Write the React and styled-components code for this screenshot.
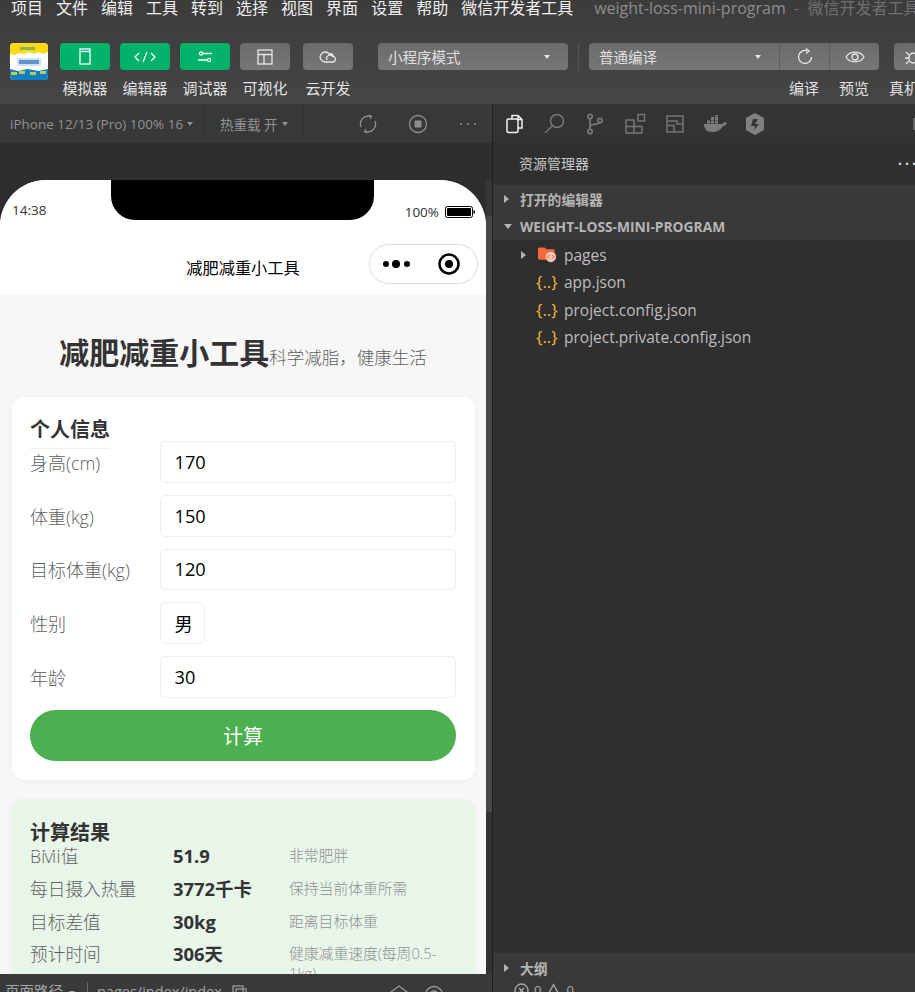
import React from 'react'
import styled, { createGlobalStyle } from 'styled-components'

const GlobalStyle = createGlobalStyle`
  html, body { margin: 0; padding: 0; background: #2f2f2f; }
  * { box-sizing: border-box; }
  body { font-family: "Open Sans", "Noto Sans CJK SC", sans-serif; }
`

const Page = styled.div`
  width: 915px;
  height: 992px;
  overflow: hidden;
  display: flex;
  flex-direction: column;
`

const Top = styled.div`
  height: 104px;
  flex: none;
  overflow: hidden;
  background: linear-gradient(#3c3c3c, #454545);
`

const MenuBar = styled.div`
  height: 43px;
  display: flex;
  align-items: flex-start;
  padding-left: 11px;
  gap: 13px;
  white-space: nowrap;
`

const MenuItem = styled.span`
  font-size: 16px;
  line-height: 17px;
  color: #f0f0f0;
`

const WindowTitle = styled.span`
  font-size: 16px;
  line-height: 17px;
  color: #8d8d8d;
  margin-left: 8px;
`

const TitleDim = styled.span`
  color: #707070;
`

const Toolbar = styled.div`
  display: flex;
  align-items: flex-start;
  padding-left: 10px;
  white-space: nowrap;
`

const Logo = styled.svg`
  width: 38px;
  height: 37px;
  margin-right: 12px;
  flex: none;
`

const Tool = styled.div`
  width: 50px;
  flex: none;
  margin-right: ${p => p.$gap ?? 10}px;
  display: flex;
  flex-direction: column;
  align-items: center;
`

const ToolButton = styled.div`
  width: 50px;
  height: 27px;
  border-radius: 4px;
  display: flex;
  align-items: center;
  justify-content: center;
  background: ${p => (p.$on ? '#00b26a' : 'linear-gradient(#6b6b6b, #777)')};
`

const ToolLabel = styled.div`
  margin-top: 8px;
  font-size: 15px;
  line-height: 20px;
  color: #e2e2e2;
`

const SelectBox = styled.div`
  width: ${p => p.$w}px;
  height: 27px;
  flex: none;
  padding: 0 18px 0 10px;
  display: flex;
  align-items: center;
  justify-content: space-between;
  font-size: 14.5px;
  color: #e0e0e0;
  background: linear-gradient(#6b6b6b, #777);
  border-radius: ${p => p.$radius || '4px'};
`

const Caret = styled.span`
  width: 0;
  height: 0;
  flex: none;
  border-left: 3.5px solid transparent;
  border-right: 3.5px solid transparent;
  border-top: 4px solid #e8e8e8;
`

const Divider = styled.div`
  width: 1px;
  height: 27px;
  flex: none;
  background: #555;
  margin: 0 10px;
`

const CompileColumn = styled.div`
  width: 290px;
  flex: none;
  display: flex;
  flex-direction: column;
`

const CompileRow = styled.div`
  display: flex;
`

const CompileIcon = styled.div`
  width: 50px;
  height: 27px;
  flex: none;
  border-left: 1px solid #5d5d5d;
  border-radius: ${p => p.$radius || '0'};
  background: linear-gradient(#6b6b6b, #777);
  display: flex;
  align-items: center;
  justify-content: center;
`

const CompileLabels = styled.div`
  display: flex;
  gap: 20px;
  padding-left: 200px;
`

const SideButton = styled.div`
  width: 50px;
  height: 27px;
  margin-left: 15px;
  border-radius: 4px;
  flex: none;
  padding-left: 11px;
  display: flex;
  align-items: center;
  background: linear-gradient(#6b6b6b, #777);
`

const Main = styled.div`
  flex: 1;
  min-height: 0;
  display: flex;
`

const Left = styled.div`
  width: 492px;
  flex: none;
  display: flex;
  flex-direction: column;
  overflow: hidden;
`

const SimBar = styled.div`
  height: 39px;
  flex: none;
  display: flex;
  align-items: center;
  background: #383838;
  color: #929292;
  font-size: 13.5px;
  white-space: nowrap;
`

const SimCell = styled.div`
  width: ${p => p.$w}px;
  height: 100%;
  flex: none;
  display: flex;
  align-items: center;
  gap: 4px;
  padding-left: ${p => p.$pad}px;
  border-right: 1px solid #333;
`

const SimCaret = styled(Caret)`
  border-top-color: #929292;
`

const SimIcons = styled.div`
  display: flex;
  align-items: center;
  gap: 30px;
  margin-left: 54px;
`

const Stage = styled.div`
  flex: 1;
  min-height: 0;
  display: flex;
  overflow: hidden;
  background: #2e2e2e;
  padding-top: 37px;
`

const Phone = styled.div`
  width: 486px;
  height: 900px;
  flex: none;
  position: relative;
  background: #f7f7f7;
  border-radius: 46px 46px 0 0;
  overflow: hidden;
`

const Notch = styled.div`
  position: absolute;
  top: 0;
  left: 111px;
  width: 263px;
  height: 40px;
  background: #000;
  border-radius: 0 0 24px 24px;
`

const StatusBar = styled.div`
  height: 57px;
  background: #fff;
  display: flex;
  justify-content: space-between;
  align-items: flex-start;
  padding: 20px 11px 0 12px;
  font-size: 13.5px;
  line-height: 20px;
  color: #333;
`

const BatteryWrap = styled.div`
  display: flex;
  align-items: center;
  gap: 6px;
  margin-top: 2px;
`

const NavBar = styled.div`
  height: 57px;
  position: relative;
  background: #fff;
  display: flex;
  align-items: center;
  justify-content: center;
  padding-top: 3px;
  font-size: 16.2px;
  color: #000;
`

const Capsule = styled.div`
  position: absolute;
  left: 369px;
  top: 7px;
  width: 109px;
  height: 40px;
  border: 1px solid #ddd;
  border-radius: 20px;
  background: #fff;
  display: flex;
  align-items: center;
  padding-left: 12px;
  gap: 26px;
`

const Body = styled.div`
  padding: 0 11px 0 12px;
`

const Hero = styled.div`
  height: 103px;
  display: flex;
  align-items: baseline;
  justify-content: center;
  padding-top: 36px;
  padding-right: 1px;
  white-space: nowrap;
`

const HeroTitle = styled.span`
  font-size: 30px;
  line-height: 46px;
  font-weight: 700;
  color: #333;
`

const HeroSub = styled.span`
  font-size: 17.5px;
  font-weight: 300;
  color: #5f5f5f;
`

const Card = styled.div`
  border-radius: 12px;
  padding: 18px 19px 19px 18px;
  margin-bottom: 19px;
  background: ${p => (p.$tint ? '#e8f5e9' : '#fff')};
  box-shadow: 0 1px 6px rgba(0, 0, 0, 0.04);
`

const CardTitle = styled.div`
  position: relative;
  width: 80px;
  height: 26px;
  font-size: 20px;
  line-height: ${p => (p.$tint ? 28 : 30)}px;
  font-weight: 700;
  color: #333;
  margin-top: ${p => p.$top || 0}px;

  &::after {
    content: '';
    position: absolute;
    left: 0;
    right: 0;
    top: 33px;
    height: 1px;
    background: ${p => (p.$tint ? '#f0f7f0' : '#eee')};
  }
`

const FormRows = styled.div`
  display: flex;
  flex-direction: column;
  gap: 12px;
`

const FormRow = styled.div`
  display: flex;
  align-items: center;
  height: 41.75px;
`

const FieldLabel = styled.div`
  width: 130px;
  flex: none;
  font-size: 18px;
  font-weight: 300;
  color: #5f5f5f;
`

const Field = styled.div`
  width: ${p => p.$w || '296px'};
  height: 100%;
  border: 1px solid #eee;
  border-radius: 5px;
  background: #fff;
  display: flex;
  align-items: center;
  padding-left: 13.5px;
  font-size: 18.2px;
  color: #000;
`

const CalcButton = styled.div`
  margin-top: 12px;
  height: 51px;
  border-radius: 26px;
  background: #4caf50;
  color: #fff;
  font-size: 20px;
  display: flex;
  align-items: center;
  justify-content: center;
`

const ResultRow = styled.div`
  display: grid;
  grid-template-columns: 143px 116px 165px;
  align-items: start;
  min-height: 32.9px;
`

const ResultLabel = styled.div`
  font-size: 17.7px;
  font-weight: 300;
  line-height: 22px;
  color: #5f5f5f;
`

const ResultValue = styled.div`
  font-size: 18.4px;
  line-height: 22px;
  font-weight: 700;
  color: #333;
`

const ResultNote = styled.div`
  font-size: 14.8px;
  font-weight: 300;
  line-height: 20px;
  color: #909090;
`

const Strip = styled.div`
  width: 6px;
  flex: none;
  background: linear-gradient(#363636 0, #363636 36px, #474747 36px, #474747 632px, #333 632px);
`

const BottomBar = styled.div`
  height: 18px;
  flex: none;
  overflow: hidden;
  position: relative;
  background: #3a3a3a;
  display: flex;
  align-items: flex-start;
  padding: 8px 0 0 5px;
  font-size: 14.5px;
  line-height: 20px;
  color: #a5a5a5;
  white-space: nowrap;
`

const PathCaret = styled(Caret)`
  margin: 9px 0 0 6px;
  border-top-color: #a5a5a5;
`

const PathDivider = styled.span`
  width: 1px;
  height: 20px;
  flex: none;
  background: #666;
  margin: 0 9px 0 12px;
`

const CopyIcon = styled.svg`
  width: 15px;
  height: 15px;
  flex: none;
  margin: 3px 0 0 10px;
`

const BottomIcons = styled.div`
  display: flex;
  gap: 15px;
  margin: 3px 0 0 142px;
`

const Right = styled.div`
  flex: 1;
  min-width: 0;
  display: flex;
  flex-direction: column;
  background: #2f2f2f;
  border-left: 1px solid #1f1f1f;
  overflow: hidden;
`

const ActivityBar = styled.div`
  height: 39px;
  flex: none;
  position: relative;
  display: flex;
  align-items: center;
  padding-left: 2px;
  background: #333;
`

const ActivitySlot = styled.div`
  width: 40px;
  flex: none;
  display: flex;
  justify-content: center;
`

const ActivityStub = styled.div`
  position: absolute;
  right: 0;
  top: 14px;
  width: 2px;
  height: 12px;
  background: #666;
`

const ExplorerHead = styled.div`
  height: 42px;
  flex: none;
  display: flex;
  align-items: center;
  justify-content: space-between;
  padding: 0 0 2px 26px;
  font-size: 14px;
  color: #c8c8c8;
`

const MoreDots = styled.span`
  font-size: 14px;
  letter-spacing: 3px;
  color: #ddd;
  font-weight: 700;
  margin-right: -4px;
  transform: translateY(-4px);
`

const SectionHead = styled.div`
  height: 27.5px;
  flex: none;
  display: flex;
  align-items: center;
  gap: 8px;
  padding-left: 11px;
  background: #393939;
  font-size: 13.8px;
  font-weight: 700;
  color: #b5b5b5;
`

const Arrow = styled.span`
  width: 0;
  height: 0;
  flex: none;
  ${p => (p.$open
    ? 'border-left: 4px solid transparent; border-right: 4px solid transparent; border-top: 5px solid #b5b5b5;'
    : `border-top: 4px solid transparent; border-bottom: 4px solid transparent; border-left: 5px solid #b5b5b5; margin-right: ${p.$flush ? 0 : 3}px;`)}
`

const Tree = styled.div`
  flex: 1;
  padding-top: 1px;
`

const TreeRow = styled.div`
  height: 27.5px;
  display: flex;
  align-items: center;
  padding-left: ${p => (p.$folder ? 28 : 43)}px;
  gap: ${p => (p.$folder ? 9 : 7)}px;
  font-size: 15.5px;
  color: #bdbdbd;
`

const FolderIcon = styled.svg`
  width: 19px;
  height: 16px;
  flex: none;
  margin: 0 -2px 0 3px;
`

const JsonIcon = styled.span`
  width: 21px;
  flex: none;
  font-size: 17px;
  line-height: 20px;
  font-weight: 500;
  white-space: nowrap;
  color: #f5b82e;
`

const Outline = styled.div`
  height: 39px;
  flex: none;
  background: #393939;
`

const OutlineHead = styled(SectionHead)`
  height: 28px;
  padding-top: 1px;
`

const StatusIcons = styled.div`
  display: flex;
  align-items: center;
  gap: 5px;
  padding-left: 21px;
  font-size: 13px;
  color: #aaa;
`

const LogoArt = () => (
  <Logo viewBox="0 0 38 37">
    <defs>
      <clipPath id="logoClip"><rect width="38" height="37" rx="4" /></clipPath>
    </defs>
    <g clipPath="url(#logoClip)">
      <rect width="38" height="37" fill="#fff" />
      <path d="M0 0h38v9l-5 2-4-2-5 2-5-2-5 2-5-1-4 2-5-1z" fill="#fbd914" />
      <rect x="10" y="4" width="15" height="3" fill="#8fb05a" />
      <rect x="7" y="15" width="24" height="8" fill="#cfe2f3" />
      <rect x="9" y="17" width="20" height="4" fill="#5f93c9" />
      <path d="M0 26l8 2 10-2 10 2 10-2v11H0z" fill="#0d7fc4" />
      <rect x="1" y="29" width="6" height="3" fill="#c7c94a" />
      <rect x="9" y="28" width="6" height="3" fill="#c7c94a" />
      <rect x="20" y="29" width="6" height="3" fill="#c7c94a" />
      <rect x="30" y="28" width="6" height="3" fill="#c7c94a" />
    </g>
  </Logo>
)

const line = { fill: 'none', stroke: 'currentColor', strokeWidth: 1.3 }

const toolIcons = [
  <svg width="12" height="17" viewBox="0 0 12 17" color="#fff"><rect x="1" y="1" width="10" height="15" {...line} /><path d="M1 3.5h10" {...line} /></svg>,
  <svg width="22" height="12" viewBox="0 0 22 12" color="#fff"><path d="M5 2L1 6l4 4M17 2l4 4-4 4M13 1L9 11" {...line} /></svg>,
  <svg width="14" height="12" viewBox="0 0 14 12" color="#fff"><circle cx="3" cy="2.5" r="1.6" {...line} /><circle cx="11" cy="9" r="1.6" {...line} /><path d="M5 2.5h9M0 9h9" {...line} /></svg>,
  <svg width="16" height="16" viewBox="0 0 16 16" color="#e8e8e8"><rect x="1" y="1" width="14" height="14" {...line} /><path d="M1 5.5h14M7 5.5V15" {...line} /></svg>,
  <svg width="19" height="13" viewBox="0 0 19 13" color="#e8e8e8"><path d="M6 12a5 5 0 1 1 4.2-8 3 3 0 0 1 4.2 2.4A2.9 2.9 0 0 1 14 12zM8 10a3 3 0 0 1 6-3" {...line} /></svg>,
]

const tools = [
  { label: '模拟器', on: true },
  { label: '编辑器', on: true },
  { label: '调试器', on: true },
  { label: '可视化', gap: 13 },
  { label: '云开发', gap: 25 },
]

const activityIcons = [
  <svg width="20" height="20" viewBox="0 0 20 20" color="#f2f2f2"><path d="M7 5V1.5h6l4 4V14h-4M13 1.5v4h4" {...line} strokeWidth="1.5" /><rect x="2" y="5" width="11" height="13.5" rx="1.5" {...line} strokeWidth="1.5" /></svg>,
  <svg width="26" height="22" viewBox="0 0 26 22" color="#777"><circle cx="15" cy="8" r="6.5" {...line} strokeWidth="1.5" /><path d="M10 13l-7 7" {...line} strokeWidth="1.5" /></svg>,
  <svg width="20" height="22" viewBox="0 0 20 22" color="#777"><circle cx="5" cy="3.5" r="2.2" {...line} strokeWidth="1.8" /><circle cx="5" cy="18.5" r="2.2" {...line} strokeWidth="1.8" /><circle cx="15" cy="7.5" r="2.2" {...line} strokeWidth="1.8" /><path d="M5 6v10M5 14c0-4 9-2 10-4.5" {...line} strokeWidth="1.8" /></svg>,
  <svg width="22" height="22" viewBox="0 0 22 22" color="#777"><path d="M2 7h8v13H2zM2 13.5h16V20H10M10 7v6" {...line} strokeWidth="1.5" /><rect x="14" y="1.5" width="6.5" height="6.5" {...line} strokeWidth="1.5" /></svg>,
  <svg width="20" height="20" viewBox="0 0 20 20" color="#777"><rect x="2" y="2" width="16" height="16" {...line} strokeWidth="1.5" /><path d="M2 7h10v3h6M2 11.5h7V18" {...line} strokeWidth="1.5" /></svg>,
  <svg width="25" height="18" viewBox="0 0 25 18" fill="#7b7b7b"><path d="M1 9h18.5c1-2 3-2 4.5-1-1 2-2 3-4 3-2 4-6 6-11 6C4 17 1 14 1 9z" /><rect x="4" y="5.5" width="3" height="3" /><rect x="8" y="5.5" width="3" height="3" /><rect x="12" y="5.5" width="3" height="3" /><rect x="8" y="2" width="3" height="3" /><rect x="12" y="2" width="3" height="3" /><rect x="12" y="0" width="3" height="1.5" /></svg>,
  <svg width="20" height="22" viewBox="0 0 20 22"><path d="M10 0l9 5v12l-9 5-9-5V5z" fill="#808080" /><path d="M8 6h5l-3 5h4l-5 6 1-4H6z" fill="#333" /></svg>,
]

const fields = [
  { label: '身高(cm)', value: '170' },
  { label: '体重(kg)', value: '150' },
  { label: '目标体重(kg)', value: '120' },
  { label: '性别', value: '男', w: '45px' },
  { label: '年龄', value: '30' },
]

const results = [
  { label: 'BMI值', value: '51.9', note: '非常肥胖' },
  { label: '每日摄入热量', value: '3772千卡', note: '保持当前体重所需' },
  { label: '目标差值', value: '30kg', note: '距离目标体重' },
  { label: '预计时间', value: '306天', note: '健康减重速度(每周0.5-1kg)' },
]

const App = () => (
  <>
    <GlobalStyle />
    <Page>
      <Top>
        <MenuBar>
          {['项目', '文件', '编辑', '工具', '转到', '选择', '视图', '界面', '设置', '帮助', '微信开发者工具'].map(m => (
            <MenuItem key={m}>{m}</MenuItem>
          ))}
          <WindowTitle>weight-loss-mini-program&nbsp;<TitleDim>&nbsp;-&nbsp;&nbsp;微信开发者工具 Stable</TitleDim></WindowTitle>
        </MenuBar>
        <Toolbar>
          <LogoArt />
          {tools.map((t, i) => (
            <Tool key={t.label} $gap={t.gap}>
              <ToolButton $on={t.on}>{toolIcons[i]}</ToolButton>
              <ToolLabel>{t.label}</ToolLabel>
            </Tool>
          ))}
          <SelectBox $w={190}>小程序模式<Caret /></SelectBox>
          <Divider />
          <CompileColumn>
            <CompileRow>
              <SelectBox $w={190} $radius="4px 0 0 4px">普通编译<Caret /></SelectBox>
              <CompileIcon>
                <svg width="18" height="18" viewBox="0 0 18 18" color="#e8e8e8"><path d="M15.5 9A6.5 6.5 0 1 1 11 2.800M10 0.5l3 2.5-3 2.5" {...line} /></svg>
              </CompileIcon>
              <CompileIcon $radius="0 4px 4px 0">
                <svg width="20" height="12" viewBox="0 0 20 12" color="#e8e8e8"><path d="M1 6c4-6.5 14-6.5 18 0-4 6.5-14 6.5-18 0z" {...line} /><circle cx="10" cy="6" r="3" {...line} /></svg>
              </CompileIcon>
            </CompileRow>
            <CompileLabels>
              <ToolLabel>编译</ToolLabel>
              <ToolLabel>预览</ToolLabel>
              <ToolLabel>真机调试</ToolLabel>
            </CompileLabels>
          </CompileColumn>
          <SideButton>
            <svg width="16" height="16" viewBox="0 0 16 16" color="#e8e8e8"><ellipse cx="8" cy="9" rx="4" ry="5" {...line} /><path d="M1 3l3 3M15 3l-3 3M0 9h4M12 9h4M1 15l3-3M15 15l-3-3" {...line} /></svg>
          </SideButton>
        </Toolbar>
      </Top>
      <Main>
        <Left>
          <SimBar>
            <SimCell $w={205} $pad={10}>iPhone 12/13 (Pro) 100% 16<SimCaret /></SimCell>
            <SimCell $w={99} $pad={15}>热重载 开<SimCaret /></SimCell>
            <SimIcons>
              <svg width="20" height="20" viewBox="0 0 20 20" color="#8e8e8e"><path d="M3 13A8 8 0 0 1 13 2.5M17 7a8 8 0 0 1-10 10.5M11 1l2.5 1.5L12 5M9 19l-2.5-1.5L8 15" {...line} /></svg>
              <svg width="20" height="20" viewBox="0 0 20 20" color="#8e8e8e"><circle cx="10" cy="10" r="8.5" {...line} /><rect x="6.5" y="6.5" width="7" height="7" rx="1" fill="#8e8e8e" /></svg>
              <svg width="20" height="20" viewBox="0 0 20 20" fill="#8e8e8e"><circle cx="3" cy="10" r="1" /><circle cx="10" cy="10" r="1" /><circle cx="17" cy="10" r="1" /></svg>
            </SimIcons>
          </SimBar>
          <Stage>
            <Phone>
              <Notch />
              <StatusBar>
                <span>14:38</span>
                <BatteryWrap>
                  <span>100%</span>
                  <svg width="30" height="12" viewBox="0 0 30 12"><rect x="0.5" y="0.5" width="27" height="11" rx="2" fill="none" stroke="#000" /><rect x="2" y="2" width="24" height="8" rx="1" fill="#000" /><path d="M28.5 4c1 0 1.5 1 1.5 2s-.5 2-1.5 2z" fill="#000" /></svg>
                </BatteryWrap>
              </StatusBar>
              <NavBar>
                减肥减重小工具
                <Capsule>
                  <svg width="30" height="10" viewBox="0 0 30 10" fill="#000"><circle cx="4" cy="5" r="3" /><circle cx="14" cy="5" r="4" /><circle cx="25" cy="5" r="3" /></svg>
                  <svg width="22" height="22" viewBox="0 0 22 22"><circle cx="11" cy="11" r="9.5" fill="none" stroke="#000" strokeWidth="2.5" /><circle cx="11" cy="11" r="4" fill="#000" /></svg>
                </Capsule>
              </NavBar>
              <Body>
                <Hero>
                  <HeroTitle>减肥减重小工具</HeroTitle>
                  <HeroSub>科学减脂，健康生活</HeroSub>
                </Hero>
                <Card>
                  <CardTitle>个人信息</CardTitle>
                  <FormRows>
                    {fields.map(f => (
                      <FormRow key={f.label}>
                        <FieldLabel>{f.label}</FieldLabel>
                        <Field $w={f.w}>{f.value}</Field>
                      </FormRow>
                    ))}
                  </FormRows>
                  <CalcButton>计算</CalcButton>
                </Card>
                <Card $tint>
                  <CardTitle $tint $top={2}>计算结果</CardTitle>
                  {results.map(r => (
                    <ResultRow key={r.label}>
                      <ResultLabel>{r.label}</ResultLabel>
                      <ResultValue>{r.value}</ResultValue>
                      <ResultNote>{r.note}</ResultNote>
                    </ResultRow>
                  ))}
                </Card>
              </Body>
            </Phone>
            <Strip />
          </Stage>
          <BottomBar>
            页面路径
            <PathCaret />
            <PathDivider />
            pages/index/index
            <CopyIcon viewBox="0 0 15 15" color="#999"><rect x="1" y="1" width="10" height="10" {...line} /><rect x="4" y="4" width="10" height="10" {...line} /></CopyIcon>
            <BottomIcons>
              <svg width="20" height="20" viewBox="0 0 20 20" color="#999"><path d="M10 1l8 6-3 1v8H5V8L2 7z" {...line} /></svg>
              <svg width="20" height="20" viewBox="0 0 20 20" color="#999"><circle cx="10" cy="10" r="8.5" {...line} /><circle cx="10" cy="10" r="4" {...line} /></svg>
            </BottomIcons>
          </BottomBar>
        </Left>
        <Right>
          <ActivityBar>
            {activityIcons.map((icon, i) => <ActivitySlot key={i}>{icon}</ActivitySlot>)}
            <ActivityStub />
          </ActivityBar>
          <ExplorerHead>
            资源管理器
            <MoreDots>...</MoreDots>
          </ExplorerHead>
          <SectionHead><Arrow />打开的编辑器</SectionHead>
          <SectionHead><Arrow $open />WEIGHT-LOSS-MINI-PROGRAM</SectionHead>
          <Tree>
            <TreeRow $folder>
              <Arrow $flush />
              <FolderIcon viewBox="0 0 20 16"><path d="M0 1.5A1.5 1.5 0 0 1 1.5 0H7l2 2h7a1.5 1.5 0 0 1 1.5 1.5V13H1.5A1.5 1.5 0 0 1 0 11.5z" fill="#f4693d" /><circle cx="13.5" cy="10" r="5.5" fill="#f7c3b3" /><path d="M12 8l-2 2 2 2M15 8l2 2-2 2" fill="none" stroke="#f4693d" /></FolderIcon>
              pages
            </TreeRow>
            {['app.json', 'project.config.json', 'project.private.config.json'].map(f => (
              <TreeRow key={f}><JsonIcon>{'{..}'}</JsonIcon>{f}</TreeRow>
            ))}
          </Tree>
          <Outline>
            <OutlineHead><Arrow />大纲</OutlineHead>
            <StatusIcons>
              <svg width="15" height="15" viewBox="0 0 15 15" color="#aaa"><circle cx="7.5" cy="7.5" r="6.5" {...line} /><path d="M5 5l5 5M10 5l-5 5" {...line} /></svg>
              0
              <svg width="15" height="15" viewBox="0 0 15 15" color="#aaa"><path d="M7.5 1.5L14 13.5H1z" {...line} /></svg>
              0
            </StatusIcons>
          </Outline>
        </Right>
      </Main>
    </Page>
  </>
)

export default App
